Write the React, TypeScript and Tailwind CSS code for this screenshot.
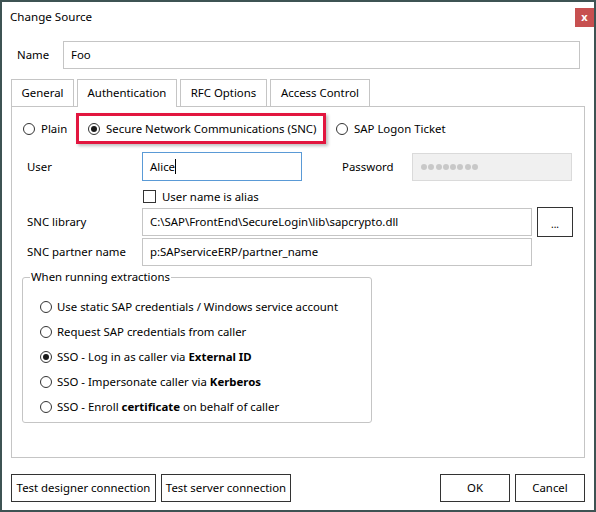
import React from 'react';

const font = { fontFamily: '"Noto Sans", "Open Sans", sans-serif' };

const Radio: React.FC<{ checked?: boolean }> = ({ checked }) => (
  <span className="flex h-[12px] w-[12px] shrink-0 items-center justify-center rounded-full border border-[#333333] bg-white">
    {checked && <span className="h-[6px] w-[6px] rounded-full bg-[#1a1a1a]" />}
  </span>
);

const Button: React.FC<{ className?: string; children: React.ReactNode }> = ({ className = '', children }) => (
  <button
    type="button"
    className={`flex items-center justify-center border border-[#333333] bg-white text-black ${className}`}
  >
    {children}
  </button>
);

const tabs = [
  { label: 'General', w: 'w-[63px]' },
  { label: 'Authentication', w: 'w-[100px]', active: true },
  { label: 'RFC Options', w: 'w-[87px]' },
  { label: 'Access Control', w: 'w-[100px]' },
];

const options: { parts: React.ReactNode; checked?: boolean }[] = [
  { parts: <>Use static SAP credentials / Windows service account</> },
  { parts: <>Request SAP credentials from caller</> },
  { parts: <>SSO - Log in as caller via <b className="font-bold">External ID</b></>, checked: true },
  { parts: <>SSO - Impersonate caller via <b className="font-bold">Kerberos</b></> },
  { parts: <>SSO - Enroll <b className="font-bold">certificate</b> on behalf of caller</> },
];

export default function App() {
  return (
    <div
      style={font}
      className="flex h-[512px] w-[596px] flex-col border-2 border-[#3e5353] bg-white text-[11.4px] leading-[16px] text-black"
    >
      {/* title bar */}
      <div className="flex h-[32px] items-start justify-between">
        <span className="pl-[8px] pt-[7px] text-[11.6px]">Change Source</span>
        <span className="mt-[6px] flex h-[19px] w-[19px] items-center justify-center bg-[#c75050] pb-[2px] text-[11px] font-bold text-white">
          x
        </span>
      </div>

      {/* name */}
      <div className="mt-[7px] flex items-center pl-[15px] pr-[14px]">
        <span className="w-[46px]">Name</span>
        <div className="flex h-[28px] flex-1 items-center border border-[#c5c5c5] px-[7px]">Foo</div>
      </div>

      {/* tabs */}
      <div className="mx-[9px] mt-[10px] flex gap-[3px]">
        {tabs.map(t => (
          <div
            key={t.label}
            className={`relative z-10 flex items-center justify-center border-x border-t border-[#c5c5c5] bg-white ${t.w} ${
              t.active ? 'mb-[-1px] h-[28px] pb-[1px]' : 'h-[27px]'
            }`}
          >
            {t.label}
          </div>
        ))}
      </div>

      {/* panel */}
      <div className="mx-[9px] h-[352px] border border-[#c5c5c5]">
        {/* auth mode */}
        <div className="mt-[6px] flex h-[31px] items-center pl-[11px]">
          <div className="flex w-[53px] items-center gap-[6px]">
            <Radio />
            <span>Plain</span>
          </div>
          <div className="flex h-[31px] w-[250px] items-center gap-[6px] whitespace-nowrap border-[3px] border-[#e2163f] pl-[9px] shadow-[2px_2px_3px_rgba(0,0,0,0.25)]">
            <Radio checked />
            <span>Secure Network Communications (SNC)</span>
          </div>
          <div className="ml-[10px] flex items-center gap-[6px]">
            <Radio />
            <span>SAP Logon Ticket</span>
          </div>
        </div>

        {/* user / password */}
        <div className="mt-[8px] flex items-center pl-[15px]">
          <span className="w-[115px]">User</span>
          <div className="flex h-[29px] w-[160px] items-center border border-[#5a9ad6] pl-[7px]">
            Alice
            <span className="h-[15px] w-px bg-black" />
          </div>
          <span className="ml-[40px] w-[70px]">Password</span>
          <div className="mt-[1px] flex h-[28px] w-[160px] items-center gap-[1.3px] border border-[#dadada] bg-[#f0f0f0] pl-[8px]">
            {Array.from({ length: 8 }).map((_, i) => (
              <span key={i} className="h-[6px] w-[6px] rounded-full bg-[#c8c8c8]" />
            ))}
          </div>
        </div>

        {/* alias */}
        <div className="mt-[9px] flex h-[13px] items-center gap-[6px] pl-[131px]">
          <span className="h-[13px] w-[13px] border border-[#333333] bg-white" />
          <span>User name is alias</span>
        </div>

        {/* snc library */}
        <div className="mt-[4px] flex h-[30px] items-center pl-[15px]">
          <span className="w-[115px]">SNC library</span>
          <div className="flex h-[28px] w-[390px] items-center border border-[#c5c5c5] pl-[7px]">
            C:\SAP\FrontEnd\SecureLogin\lib\sapcrypto.dll
          </div>
          <Button className="ml-[5px] h-[30px] w-[36px] pt-[4px] text-[10px]">...</Button>
        </div>

        {/* partner */}
        <div className="mt-[1px] flex h-[28px] items-center pl-[15px]">
          <span className="w-[115px]">SNC partner name</span>
          <div className="flex h-[28px] w-[390px] items-center border border-[#c5c5c5] pl-[7px]">
            p:SAPserviceERP/partner_name
          </div>
        </div>

        {/* extraction mode */}
        <fieldset className="ml-[10px] mt-[3px] w-[350px] rounded-[3px] border border-[#c5c5c5] pb-[3px] pt-[9px]">
          <legend className="ml-[7px] px-[1px]">When running extractions</legend>
          {options.map((o, i) => (
            <div key={i} className="flex h-[25px] items-center gap-[5px] pl-[17px]">
              <Radio checked={o.checked} />
              <span>{o.parts}</span>
            </div>
          ))}
        </fieldset>
      </div>

      {/* footer */}
      <div className="mt-[16px] flex px-[9px]">
        <Button className="h-[28px] w-[145px]">Test designer connection</Button>
        <Button className="ml-[5px] h-[28px] w-[130px]">Test server connection</Button>
        <div className="flex-1" />
        <Button className="h-[28px] w-[70px]">OK</Button>
        <Button className="ml-[5px] h-[28px] w-[70px]">Cancel</Button>
      </div>
    </div>
  );
}
